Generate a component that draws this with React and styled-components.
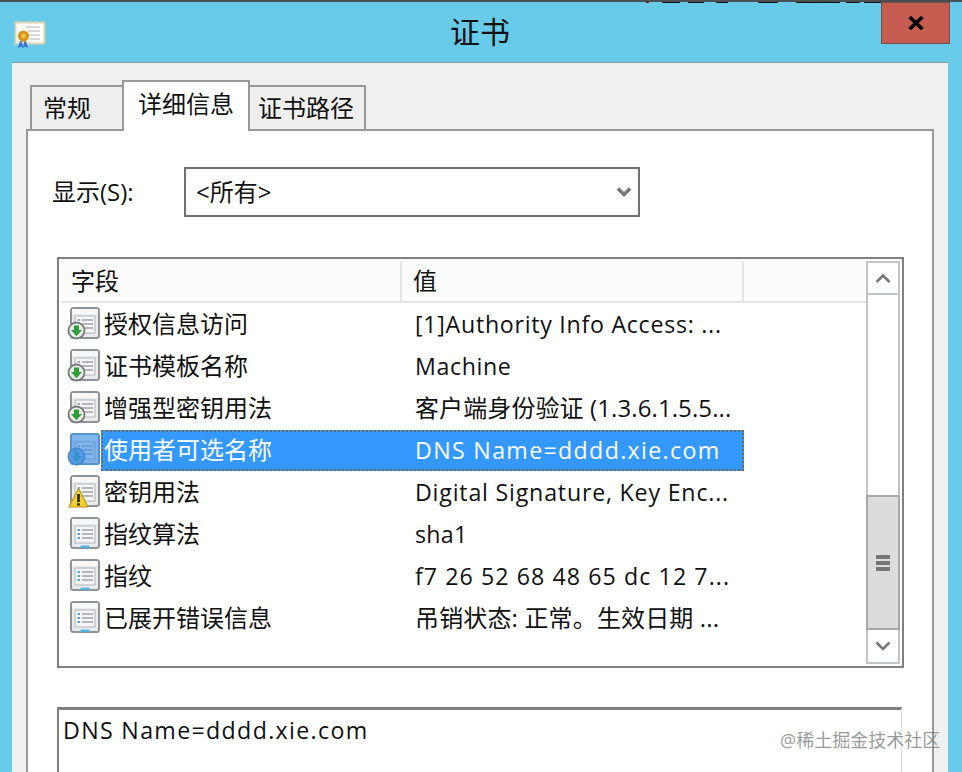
import React from 'react';
import styled, { createGlobalStyle } from 'styled-components';

const Global = createGlobalStyle`
  html, body { margin: 0; padding: 0; height: 772px; overflow: hidden; background: #68cbea; }
  #root { height: 772px; }
  * { box-sizing: border-box; }
`;
const FONT = `"Open Sans", "Noto Sans CJK SC", sans-serif`;

const Frame = styled.div`
  position: relative; width: 962px; height: 772px; overflow: hidden;
  display: flex; flex-direction: column;
  background: #68cbea; border-top: 2px solid #4a4f52;
  font-family: ${FONT}; color: #111;
`;
const TopScrap = styled.svg`position: absolute; left: 640px; top: -2px;`;
const TitleBar = styled.div`
  flex: none; height: 60px; display: flex; align-items: flex-start; position: relative;
`;
const TitleIcon = styled.svg`margin: 19px 0 0 14px; flex: none;`;
const Title = styled.div`
  position: absolute; left: 0; right: 0; top: 10px; text-align: center;
  font-size: 30px; line-height: 40px; color: #111; padding-right: 2px;
`;
const Close = styled.div`
  position: absolute; left: 881px; top: 0; width: 69px; height: 42px;
  background: #c65b50; border: 1px solid #6e4f4c;
  display: flex; align-items: center; justify-content: center;
`;
const Client = styled.div`
  flex: 1; margin: 0 14px 0 12px; background: #f0f0f0;
  border-top: 1px solid #8b9aa0; padding: 17px 0 0 14px; min-height: 0;
`;
const Tabs = styled.div`
  display: flex; align-items: flex-end; height: 49px; padding-left: 4px; position: relative; z-index: 1;
`;
const Tab = styled.div`
  height: ${p => (p.$active ? '51px' : '44px')};
  width: ${p => p.$w}px;
  margin-bottom: ${p => (p.$active ? '-2px' : '0')};
  background: ${p => (p.$active ? '#fff' : '#efefef')};
  border: 2px solid #999;
  border-bottom: none;
  ${p => (p.$first ? 'border-right: none;' : '')}
  ${p => (p.$last ? 'border-left: none;' : '')}
  padding: ${p => (p.$active ? '6px 0 0 14px' : `5px 0 0 ${p.$pad}px`)};
  font-size: 24px; line-height: 32px; white-space: nowrap;
`;
const Panel = styled.div`
  width: 908px; height: 700px; background: #fff; border: 2px solid #999;
  padding: 36px 28px 0 29px;
`;
const ShowRow = styled.div`
  display: flex; align-items: center; height: 50px; margin-left: -5px;
`;
const ShowLabel = styled.div`
  width: 132px; font-size: 24px; line-height: 32px;
`;
const Select = styled.div`
  width: 456px; height: 50px; border: 2px solid #707070; background: #fff;
  display: flex; align-items: center; justify-content: space-between;
  padding: 0 7px 0 10px; font-size: 24px; line-height: 32px;
`;
const FieldList = styled.div`
  margin-top: 40px; height: 411px; width: 847px; border: 2px solid #808080; padding: 2px;
  display: flex; background: #fff;
`;
const ListBody = styled.div`flex: 1; min-width: 0;`;
const HeaderRow = styled.div`
  display: flex; height: 42px; background: #fbfbfb; border-bottom: 2px solid #e4e4e4;
`;
const HeaderCell = styled.div`
  width: ${p => p.$w}px; border-right: 2px solid #e6e6e6; font-size: 24px; line-height: 40px;
  padding-left: ${p => p.$pad}px;
`;
const Row = styled.div`
  display: flex; height: 42px; width: 683px; padding-left: 6px; align-items: center;
`;
const RowIcon = styled.svg`flex: none; width: 34px; height: 34px;`;
const Cells = styled.div`
  flex: 1; height: 41px; display: flex; align-items: center;
  ${p => p.$sel ? `
    background: #3399ff; color: #fff; outline: 2px dotted #6f6a55; outline-offset: -2px;
  ` : ''}
`;
const NameCell = styled.div`
  width: 314px; padding-left: 3px; font-size: 24px; line-height: 32px; white-space: nowrap;
`;
const ValueCell = styled.div`
  flex: 1; font-size: ${p => p.$size}px; letter-spacing: ${p => p.$ls}px;
  line-height: 32px; white-space: nowrap; overflow: hidden;
`;
const Scrollbar = styled.div`
  flex: none; width: 34px; margin-left: auto; border: 2px solid #c2c5c8;
  display: flex; flex-direction: column; background: #fff;
`;
const ScrollBtn = styled.div`
  height: ${p => p.$h}px; flex: none; display: flex; align-items: center; justify-content: center;
  ${p => p.$top ? 'border-bottom: 2px solid #c2c5c8;' : ''}
`;
const Track = styled.div`flex: 1; display: flex; flex-direction: column; justify-content: flex-end;`;
const Thumb = styled.div`
  height: 135px; margin: 0 -2px; background: #dcdcdc; border: 2px solid #a8a8a8;
  display: flex; align-items: center; justify-content: center;
`;
const Grip = styled.div`
  width: 14px; height: 16px;
  background: repeating-linear-gradient(#777 0 4px, #dcdcdc 4px 6px);
`;
const Detail = styled.div`
  margin-top: 39px; width: 845px; height: 120px; background: #fff;
  border-top: 3px solid #808080; border-left: 2px solid #808080; border-right: 1px solid #ddd;
  padding: 4px 0 0 4px; font-size: 23.2px; line-height: 32px; letter-spacing: 1.33px;
`;
const Watermark = styled.div`
  position: absolute; left: 780px; top: 726px; font-size: 18px; line-height: 24px;
  color: rgba(120,120,120,0.75); white-space: nowrap;
`;

const Sheet = ({ plain }) => (
  <>
    <rect x="4" y="1" width="28" height="30" rx="2.5" fill="#e9ebee" stroke="#8f9296" strokeWidth="2" />
    <rect x="5" y="2" width="26" height="5" fill="#f7f7f7" />
    <rect x="8" y="9" width="20" height="17" fill="#f3f4f6" stroke="#b3b6ba" />
    <path d="M15 13h11M15 17h11M15 21h11" stroke="#9ea3a8" strokeWidth="1.6" />
    <path d="M10.5 13h2.5M10.5 17h2.5M10.5 21h2.5" stroke={plain ? '#4aa8dc' : '#a5a9ad'} strokeWidth="1.8" />
    {plain && <rect x="13.5" y="28.6" width="9" height="2.4" fill="#4db4e6" />}
  </>
);
const Download = () => (
  <>
    <circle cx="9.5" cy="23.5" r="8" fill="#e8efe6" stroke="#777c78" strokeWidth="1.8" />
    <path d="M7 18.5h5v4.6h3l-5.5 6.2L4 23.1h3z" fill="#2f9e3a" />
  </>
);
const FieldIcon = ({ kind }) => (
  <RowIcon viewBox="0 0 34 34">
    {kind === 'green' && (<><Sheet /><Download /></>)}
    {kind === 'plain' && <Sheet plain />}
    {kind === 'warn' && (
      <>
        <Sheet />
        <path d="M11.5 13.5L21 32H2z" fill="#f4d02f" stroke="#b9971a" strokeWidth="1.2" strokeLinejoin="round" />
        <rect x="10.2" y="19" width="2.6" height="8" fill="#222" />
        <rect x="10.2" y="28.2" width="2.6" height="2.4" fill="#222" />
      </>
    )}
    {kind === 'sel' && (
      <>
        <Sheet /><Download />
        <rect x="3" y="0" width="30" height="32" rx="3" fill="#3a8fe6" fillOpacity="0.62" />
        <circle cx="9.5" cy="23.5" r="8.9" fill="#3a8fe6" fillOpacity="0.62" />
      </>
    )}
  </RowIcon>
);

const CertIcon = () => (
  <TitleIcon width="32" height="28" viewBox="0 0 32 28">
    <rect x="1.5" y="1.5" width="29" height="21" fill="#fff" stroke="#e2cfa2" strokeWidth="2.4" strokeDasharray="2 1" />
    <path d="M12 6h14M14 10h12M15 14h11M15 18h11" stroke="#c9ccd0" strokeWidth="1.4" />
    <path d="M6 20l-2 7 3-1.4 2 1.4 1-6zM12 20l2 7-3-1.4-2 1.4-1-6z" fill="#3a6fd8" />
    <circle cx="9.5" cy="15" r="5.6" fill="#d8941a" />
    <circle cx="9.5" cy="15" r="2.4" fill="#f0c040" />
  </TitleIcon>
);
const Chevron = ({ d, w = 16, h = 10, sw = 2.6 }) => (
  <svg width={w} height={h} viewBox={`0 0 ${w} ${h}`}>
    <path d={d} fill="none" stroke="#777" strokeWidth={sw} />
  </svg>
);

const rows = [
  ['green', '授权信息访问', '[1]Authority Info Access: ...', 23.2, 0.72],
  ['green', '证书模板名称', 'Machine', 23.2, 0.6],
  ['green', '增强型密钥用法', '客户端身份验证 (1.3.6.1.5.5...', 24, 0.1],
  ['sel', '使用者可选名称', 'DNS Name=dddd.xie.com', 23.2, 1.33],
  ['warn', '密钥用法', 'Digital Signature, Key Enc...', 23.2, 0.8],
  ['plain', '指纹算法', 'sha1', 23.2, 0.25],
  ['plain', '指纹', 'f7 26 52 68 48 65 dc 12 7...', 23.2, 1.07],
  ['plain', '已展开错误信息', '吊销状态: 正常。生效日期 ...', 24, 0.15],
];

export default function App() {
  return (
    <Frame>
      <Global />
      <TopScrap width="262" height="4" viewBox="0 0 262 4">
        <path d="M6 0h3v3H6zM22 0h18v3H22zM48 0h16v3H48zM76 0h12v3H76zM118 0h20v3h-20zM156 0h44v3h-44zM206 0h14v3h-14zM224 0h24v3h-24z" fill="#111" />
      </TopScrap>
      <TitleBar>
        <CertIcon />
        <Title>证书</Title>
        <Close>
          <svg width="16" height="14" viewBox="0 0 16 14">
            <path d="M1.5 1l13 12M14.5 1l-13 12" stroke="#000" strokeWidth="3.6" />
          </svg>
        </Close>
      </TitleBar>
      <Client>
        <Tabs>
          <Tab $w={92} $first $pad={11}>常规</Tab>
          <Tab $w={128} $active>详细信息</Tab>
          <Tab $w={116} $last $pad={8}>证书路径</Tab>
        </Tabs>
        <Panel>
          <ShowRow>
            <ShowLabel>显示(S):</ShowLabel>
            <Select>
              <span>&lt;所有&gt;</span>
              <Chevron w={14} h={10} sw={3.4} d="M1 1.5l6 6 6-6" />
            </Select>
          </ShowRow>
          <FieldList>
            <ListBody>
              <HeaderRow>
                <HeaderCell $w={341} $pad={10}>字段</HeaderCell>
                <HeaderCell $w={342} $pad={11}>值</HeaderCell>
              </HeaderRow>
              {rows.map(([kind, name, value, size, ls]) => (
                <Row key={name}>
                  <FieldIcon kind={kind} />
                  <Cells $sel={kind === 'sel'}>
                    <NameCell>{name}</NameCell>
                    <ValueCell $size={size} $ls={ls}>{value}</ValueCell>
                  </Cells>
                </Row>
              ))}
            </ListBody>
            <Scrollbar>
              <ScrollBtn $h={32} $top>
                <Chevron d="M1.5 9l6.5-6.5L14.5 9" />
              </ScrollBtn>
              <Track>
                <Thumb><Grip /></Thumb>
              </Track>
              <ScrollBtn $h={32}>
                <Chevron d="M1.5 1.5L8 8l6.5-6.5" />
              </ScrollBtn>
            </Scrollbar>
          </FieldList>
          <Detail>DNS Name=dddd.xie.com</Detail>
        </Panel>
      </Client>
      <Watermark>@稀土掘金技术社区</Watermark>
    </Frame>
  );
}
